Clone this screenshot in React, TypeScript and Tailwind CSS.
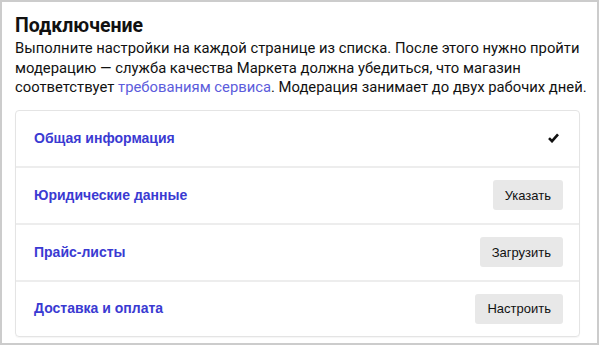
import React from "react";

const rows: { title: string; action?: string }[] = [
  { title: "Общая информация" },
  { title: "Юридические данные", action: "Указать" },
  { title: "Прайс-листы", action: "Загрузить" },
  { title: "Доставка и оплата", action: "Настроить" },
];

export default function App() {
  return (
    <div className="w-[599px] h-[345px] border-2 border-[#cccccc] bg-white">
      <div className="px-[13px] pt-[12px]">
        <h1 className="text-[19.5px] font-bold leading-[24px] text-[#111] [font-family:Roboto,'Liberation_Sans',sans-serif]">
          Подключение
        </h1>
        <p className="mt-[1px] whitespace-nowrap text-[14.8px] leading-[19.6px] text-[#111] [font-family:Roboto,'Liberation_Sans',sans-serif]">
          Выполните настройки на каждой странице из списка. После этого нужно пройти
          <br />
          модерацию — служба качества Маркета должна убедиться, что магазин
          <br />
          соответствует <span className="text-[#5c5cdc]">требованиям сервиса</span>. Модерация занимает до двух рабочих дней.
        </p>
        <div className="mt-[12px] w-[565px] rounded-[4px] border border-[#e4e4e4] shadow-[0_1px_1px_rgba(0,0,0,0.04)] [font-family:'Liberation_Sans',Arial,sans-serif]">
          {rows.map((r, i) => (
            <div
              key={r.title}
              className={
                "flex items-center justify-between pl-[18px] pr-[16px] " +
                (i < rows.length - 1 ? "h-[57px] border-b-2 border-[#ededed]" : "h-[54px]")
              }
            >
              <span className="text-[14px] font-bold text-[#3a3ad2]">{r.title}</span>
              {r.action ? (
                <button className="h-[30px] px-[12px] rounded-[3px] bg-[#e8e8e8] text-[13px] text-[#111]">
                  {r.action}
                </button>
              ) : (
                <svg width="11" height="10" viewBox="0 0 11 10" className="mr-[4px]">
                  <path d="M1 5.2 L4 8.2 L10 1.3" fill="none" stroke="#111" strokeWidth="2.6" />
                </svg>
              )}
            </div>
          ))}
        </div>
      </div>
    </div>
  );
}
